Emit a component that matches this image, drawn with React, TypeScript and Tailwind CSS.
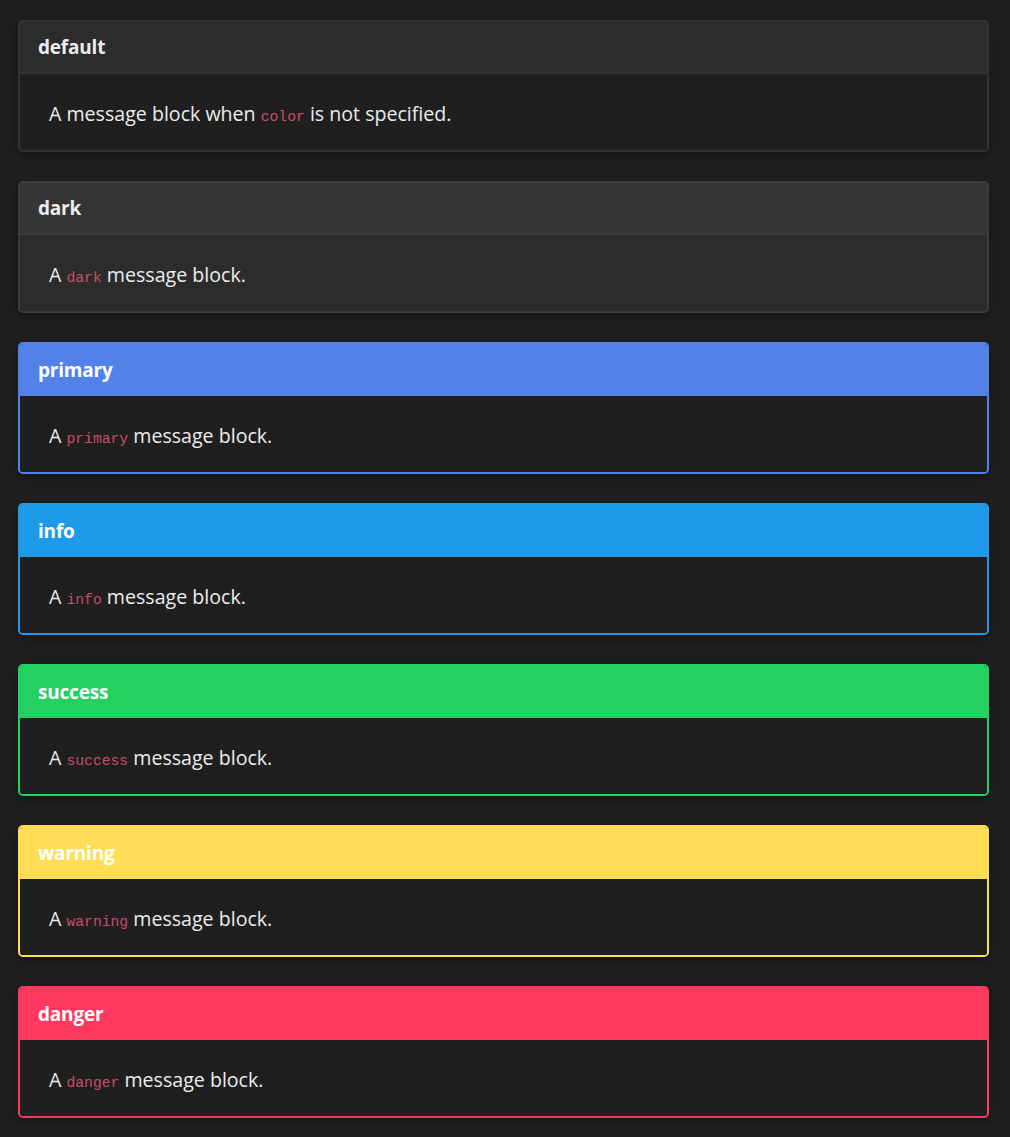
const blocks = [
  {
    title: "default",
    code: "color",
    before: "A message block when ",
    after: " is not specified.",
    wrap: "border-[#333333]",
    head: "bg-[#2c2c2c] border-b-2 border-[#333333] text-[#ececec]",
    body: "bg-[#1f1f1f]",
  },
  {
    title: "dark",
    code: "dark",
    before: "A ",
    after: " message block.",
    wrap: "border-[#3c3c3c]",
    head: "bg-[#353535] border-b-2 border-[#3c3c3c] text-[#ececec]",
    body: "bg-[#2c2c2c]",
  },
  {
    title: "primary",
    code: "primary",
    before: "A ",
    after: " message block.",
    wrap: "border-[#5282e8]",
    head: "bg-[#5282e8] text-white",
    body: "bg-[#1f1f1f]",
  },
  {
    title: "info",
    code: "info",
    before: "A ",
    after: " message block.",
    wrap: "border-[#1e9be8]",
    head: "bg-[#1e9be8] text-white",
    body: "bg-[#1f1f1f]",
  },
  {
    title: "success",
    code: "success",
    before: "A ",
    after: " message block.",
    wrap: "border-[#22d15f]",
    head: "bg-[#22d15f] text-white",
    body: "bg-[#1f1f1f]",
  },
  {
    title: "warning",
    code: "warning",
    before: "A ",
    after: " message block.",
    wrap: "border-[#ffdd57]",
    head: "bg-[#ffdd57] text-white",
    body: "bg-[#1f1f1f]",
  },
  {
    title: "danger",
    code: "danger",
    before: "A ",
    after: " message block.",
    wrap: "border-[#ff3860]",
    head: "bg-[#ff3860] text-white",
    body: "bg-[#1f1f1f]",
  },
];

export default function App() {
  return (
    <main className="min-h-[1137px] bg-[#1f1f1f] pl-[18px] pt-[20px] font-['Open_Sans','Lato',sans-serif]">
      <div className="flex w-[971px] flex-col gap-[29px]">
        {blocks.map((b) => (
          <article
            key={b.title}
            className={`overflow-hidden rounded-[5px] border-2 shadow-[0_3px_8px_rgba(0,0,0,0.35)] ${b.wrap}`}
          >
            <div className={`flex h-[52px] items-center px-[18px] text-[19px] font-bold tracking-[-0.2px] ${b.head}`}>
              {b.title}
            </div>
            <div className={`flex h-[76px] items-center px-[29px] pt-[3px] text-[19.6px] text-[#ececec] ${b.body}`}>
              <p>
                {b.before}
                <code className="font-['Liberation_Mono',monospace] text-[14.7px] text-[#c94d69]">
                  {b.code}
                </code>
                {b.after}
              </p>
            </div>
          </article>
        ))}
      </div>
    </main>
  );
}
